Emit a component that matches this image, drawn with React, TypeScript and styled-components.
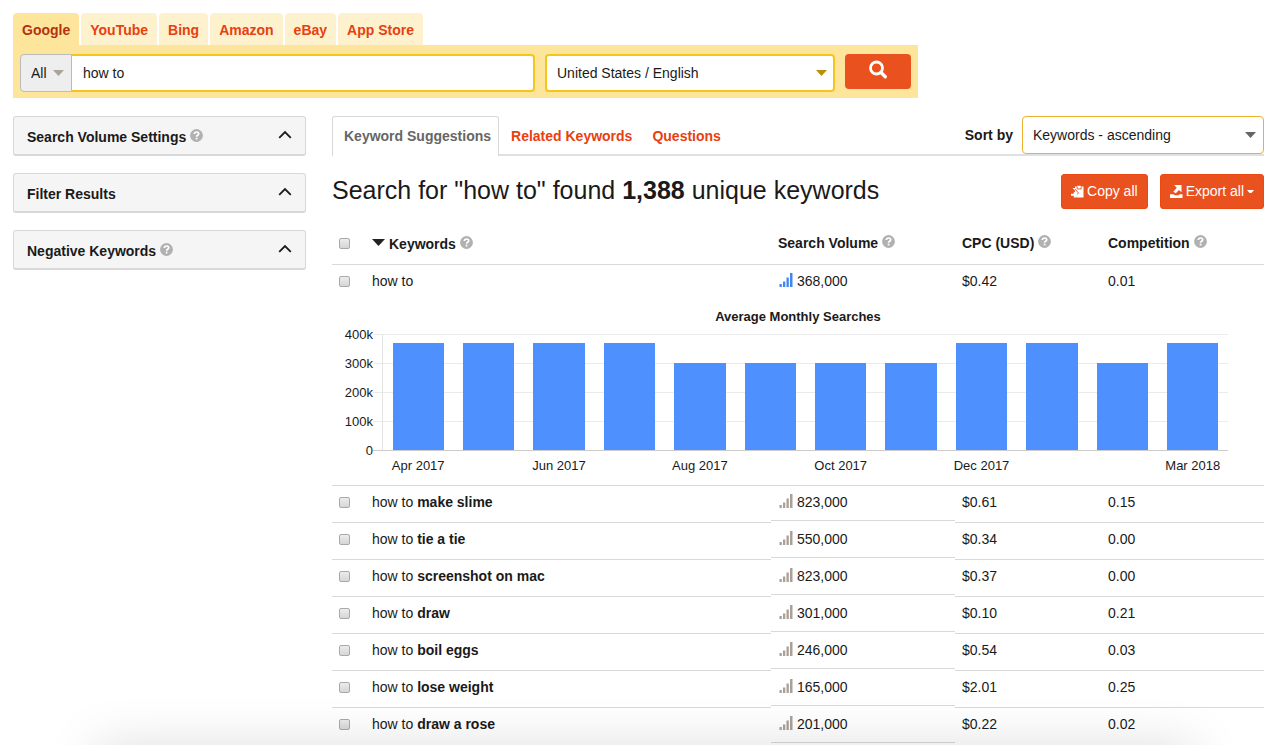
import React from "react";
import styled, { createGlobalStyle } from "styled-components";

const GlobalStyle = createGlobalStyle`
  * { box-sizing: border-box; }
  body {
    margin: 0;
    background: #fff;
    color: #1a1a1a;
    font: 14px/20px "Liberation Sans", Arial, Helvetica, sans-serif;
  }
  button, input, select { font: inherit; color: inherit; margin: 0; }
  a { text-decoration: none; }
`;

const Page = styled.div`
  padding: 13px 16px 0 13px;
  overflow: hidden;
`;

const SearchArea = styled.header`
  display: grid;
  grid-template-columns: minmax(0, 905fr) 346fr;
`;

const SourceTabs = styled.nav`
  display: flex;
  gap: 2px;
`;

const SourceTab = styled.a<{ $active?: boolean }>`
  height: 32px;
  padding: 0 9px;
  border-radius: 4px 4px 0 0;
  background: ${(p) => (p.$active ? "#fde59b" : "#fdf2cd")};
  color: ${(p) => (p.$active ? "#b5310f" : "#e8400f")};
  font-weight: bold;
  line-height: 34px;
  white-space: nowrap;
`;

const SearchForm = styled.form`
  display: flex;
  align-items: flex-start;
  gap: 10px;
  padding: 9px 7px 6px;
  background: #fde59b;
`;

const QueryGroup = styled.div`
  flex: 515 1 0;
  min-width: 0;
  height: 38px;
  display: flex;
`;

const SelectWrap = styled.div<{ $grow?: number; $width?: number }>`
  position: relative;
  flex: ${(p) => (p.$grow ? `${p.$grow} 1 0` : "none")};
  width: ${(p) => (p.$width ? `${p.$width}px` : "auto")};
  height: 38px;
`;

const Select = styled.select<{ $tone: "gray" | "gold" | "amber" }>`
  appearance: none;
  width: 100%;
  height: 100%;
  padding: 0 10px;
  border: ${(p) => (p.$tone === "gold" ? 2 : 1)}px solid
    ${(p) => ({ gray: "#bbb", gold: "#f6c51c", amber: "#eeb02e" })[p.$tone]};
  border-radius: ${(p) => (p.$tone === "gray" ? "4px 0 0 4px" : "4px")};
  background: ${(p) => (p.$tone === "gray" ? "#eee" : "#fff")};
`;

const Caret = styled.svg<{ $right: number }>`
  position: absolute;
  top: 50%;
  right: ${(p) => p.$right}px;
  margin-top: -3px;
  pointer-events: none;
`;

const QueryInput = styled.input`
  flex: 1;
  min-width: 0;
  padding: 0 11px;
  border: 2px solid #f6c51c;
  border-left: 0;
  border-radius: 0 4px 4px 0;
  background: #fff;
`;

const SearchButton = styled.button`
  width: 66px;
  height: 35px;
  display: flex;
  justify-content: center;
  padding: 6px 0 0;
  border: 0;
  border-radius: 4px;
  background: #e9511f;
`;

const Columns = styled.div`
  display: grid;
  grid-template-columns: 293px minmax(0, 1fr);
  gap: 26px;
  margin-top: 18px;
`;

const Sidebar = styled.aside`
  display: flex;
  flex-direction: column;
  gap: 17px;
`;

const PanelButton = styled.button`
  display: flex;
  align-items: center;
  justify-content: space-between;
  height: 40px;
  padding: 2px 13px 0;
  border: 1px solid #d8d8d8;
  border-bottom-width: 2px;
  border-radius: 3px;
  background: #f5f5f5;
  font-weight: bold;
`;

const WithHelp = styled.span`
  display: inline-flex;
  align-items: center;
  gap: 4px;
  white-space: nowrap;
`;

const HelpSvg = styled.svg`
  margin-bottom: 3px;
`;

const ChevronSvg = styled.svg`
  margin-bottom: 4px;
`;

const ResultTabs = styled.div`
  display: flex;
  height: 40px;
  border-bottom: 2px solid #e0e0e0;
`;

const ResultTab = styled.a<{ $active?: boolean }>`
  height: ${(p) => (p.$active ? 40 : 38)}px;
  padding: ${(p) => (p.$active ? "0 7px 0 11px" : "0 8px 0 12px")};
  border: ${(p) => (p.$active ? "1px solid #d8d8d8" : "0")};
  border-bottom: 0;
  border-radius: 3px 3px 0 0;
  background: #fff;
  color: ${(p) => (p.$active ? "#666" : "#e8400f")};
  font-weight: bold;
  line-height: ${(p) => (p.$active ? 38 : 40)}px;
  white-space: nowrap;
`;

const SortGroup = styled.div`
  display: flex;
  align-items: center;
  gap: 9px;
  margin-left: auto;
`;

const SortLabel = styled.label`
  font-weight: bold;
`;

const Summary = styled.div`
  display: flex;
  align-items: center;
  gap: 12px;
  height: 72px;
  padding-bottom: 2px;
`;

const Title = styled.h1`
  flex: 1;
  margin: 0;
  padding-bottom: 2px;
  font-size: 25px;
  font-weight: normal;
  line-height: 32px;
`;

const ActionButton = styled.button`
  display: flex;
  align-items: center;
  gap: 3px;
  height: 35px;
  padding: 0 9px;
  border: 1px solid #ea4a12;
  border-radius: 3px;
  background: #e9511f;
  color: #fff;
`;

const Results = styled.table`
  width: 100%;
  table-layout: fixed;
  border-collapse: separate;
  border-spacing: 0;
`;

const CheckCol = styled.col`
  width: 40px;
`;
const VolumeCol = styled.col`
  width: 184px;
`;
const CpcCol = styled.col`
  width: 146px;
`;
const CompetitionCol = styled.col`
  width: 163px;
`;

const HeadCell = styled.th<{ $inset?: number }>`
  height: 37px;
  padding: 0 0 7px ${(p) => p.$inset ?? 0}px;
  border-bottom: 1px solid #d9d9d9;
  text-align: left;
`;

const Cell = styled.td<{ $inset?: number; $ruled?: boolean }>`
  height: 37px;
  padding: 0 0 0 ${(p) => p.$inset ?? 0}px;
  border-bottom: ${(p) => (p.$ruled ? "1px solid #d9d9d9" : "0")};
  vertical-align: top;
  line-height: 33px;
`;

const Volume = styled.div<{ $ruled?: boolean }>`
  display: flex;
  gap: 4px;
  height: 35px;
  padding-left: 8px;
  border-bottom: ${(p) => (p.$ruled ? "1px solid #d9d9d9" : "0")};
`;

const BarsSvg = styled.svg`
  margin-top: 8px;
`;

const Check = styled.input<{ $head?: boolean }>`
  appearance: none;
  display: block;
  width: 11px;
  height: 11px;
  margin: ${(p) => (p.$head ? 1 : 11)}px 0 0 7px;
  border: 1px solid #a9a9a9;
  border-radius: 2px;
  background: linear-gradient(#ececec, #d6d6d6);
`;

const ChartCell = styled.td`
  padding: 7px 36px 4px 0;
  border-bottom: 1px solid #d9d9d9;
`;

const ChartTitle = styled.div`
  padding-left: 36px;
  font-size: 13px;
  font-weight: bold;
  line-height: 16px;
  text-align: center;
`;

const ChartGrid = styled.div`
  display: grid;
  grid-template-columns: 41px minmax(0, 1fr);
  align-items: start;
  margin-top: 2px;
  font-size: 13px;
`;

const YAxis = styled.div`
  display: flex;
  flex-direction: column;
  gap: 14px;
  text-align: right;
  line-height: 15px;
`;

const PlotArea = styled.div`
  padding-top: 7px;
`;

const Plot = styled.div`
  display: grid;
  grid-template-columns: 10px repeat(12, minmax(0, 1fr));
  align-items: end;
  justify-items: center;
  height: 117px;
  border-bottom: 1px solid #ccc;
  background: repeating-linear-gradient(#ebebeb 0 1px, transparent 1px 29px);
`;

const AxisLine = styled.span`
  justify-self: end;
  width: 1px;
  height: 100%;
  background: #e4e4e4;
`;

const Bar = styled.span`
  width: 73%;
  background: #4d90fe;
`;

const Months = styled.div`
  display: grid;
  grid-template-columns: repeat(12, minmax(0, 1fr));
  padding-left: 10px;
  line-height: 30px;
`;

const Month = styled.span`
  display: flex;
  justify-content: center;
  white-space: nowrap;
`;

const BottomShadow = styled.div`
  position: fixed;
  top: 100%;
  left: 95px;
  right: 85px;
  height: 100px;
  box-shadow: 0 0 52px rgba(0, 0, 0, 0.13);
  pointer-events: none;
`;

const Help = () => (
  <HelpSvg width="13" height="13" viewBox="0 0 13 13" aria-hidden="true">
    <circle cx="6.5" cy="6.5" r="6.4" fill="#b1b1b1" />
    <path d="M4.3 5.1C4.3 3.7 5.200 3 6.500 3s2.200.7 2.200 1.800c0 1.500-2.100 1.500-2.100 3" fill="none" stroke="#fff" strokeWidth="1.7" />
    <rect x="5.700" y="8.700" width="1.800" height="1.700" fill="#fff" />
  </HelpSvg>
);

const DownArrow = ({ color, right }: { color: string; right: number }) => (
  <Caret $right={right} width="11" height="6" viewBox="0 0 11 6" aria-hidden="true">
    <path d="M0 0h11L5.5 6z" fill={color} />
  </Caret>
);

const ChevronUp = () => (
  <ChevronSvg width="14" height="9" viewBox="0 0 14 9" aria-hidden="true">
    <path d="M1.2 7.800L7 2l5.800 5.800" fill="none" stroke="#1a1a1a" strokeWidth="1.800" />
  </ChevronSvg>
);

const VolumeBars = ({ active }: { active?: boolean }) => (
  <BarsSvg width="14" height="14" viewBox="0 0 14 14" fill={active ? "#4285f4" : "#aaa097"} aria-hidden="true">
    <rect x="0.500" y="11" width="2.300" height="3" />
    <rect x="4" y="8.500" width="2.300" height="5.500" />
    <rect x="7.500" y="4.500" width="2.300" height="9.500" />
    <rect x="11" y="0" width="2.500" height="14" />
  </BarsSvg>
);

const sources = ["Google", "YouTube", "Bing", "Amazon", "eBay", "App Store"];
const panels = [
  { label: "Search Volume Settings", help: true },
  { label: "Filter Results", help: false },
  { label: "Negative Keywords", help: true },
];
const months = [
  { label: "Apr 2017", value: 368 },
  { label: "", value: 368 },
  { label: "Jun 2017", value: 368 },
  { label: "", value: 368 },
  { label: "Aug 2017", value: 301 },
  { label: "", value: 301 },
  { label: "Oct 2017", value: 301 },
  { label: "", value: 301 },
  { label: "Dec 2017", value: 368 },
  { label: "", value: 368 },
  { label: "", value: 301 },
  { label: "Mar 2018", value: 368 },
];
const rows = [
  ["make slime", "823,000", "$0.61", "0.15"],
  ["tie a tie", "550,000", "$0.34", "0.00"],
  ["screenshot on mac", "823,000", "$0.37", "0.00"],
  ["draw", "301,000", "$0.10", "0.21"],
  ["boil eggs", "246,000", "$0.54", "0.03"],
  ["lose weight", "165,000", "$2.01", "0.25"],
  ["draw a rose", "201,000", "$0.22", "0.02"],
];

export default function App() {
  return (
    <Page>
      <GlobalStyle />
      <SearchArea>
        <div>
          <SourceTabs aria-label="Search source">
            {sources.map((name, i) => (
              <SourceTab key={name} href="#" $active={i === 0}>
                {name}
              </SourceTab>
            ))}
          </SourceTabs>
          <SearchForm onSubmit={(e) => e.preventDefault()}>
            <QueryGroup>
              <SelectWrap $width={52}>
                <Select $tone="gray" aria-label="Search type">
                  <option>All</option>
                </Select>
                <DownArrow color="#aaa49a" right={8} />
              </SelectWrap>
              <QueryInput aria-label="Keyword" defaultValue="how to" />
            </QueryGroup>
            <SelectWrap $grow={290}>
              <Select $tone="gold" aria-label="Country and language">
                <option>United States / English</option>
              </Select>
              <DownArrow color="#bd8d0b" right={8} />
            </SelectWrap>
            <SearchButton aria-label="Search">
              <svg width="20" height="20" viewBox="0 0 20 20" fill="none" stroke="#fff" aria-hidden="true">
                <circle cx="8.500" cy="8" r="6" strokeWidth="2.800" />
                <path d="M13 12.500l4.300 4.300" strokeWidth="3.400" strokeLinecap="round" />
              </svg>
            </SearchButton>
          </SearchForm>
        </div>
      </SearchArea>

      <Columns>
        <Sidebar>
          {panels.map((p) => (
            <PanelButton key={p.label} type="button" aria-expanded="false">
              <WithHelp>
                {p.label}
                {p.help && <Help />}
              </WithHelp>
              <ChevronUp />
            </PanelButton>
          ))}
        </Sidebar>

        <main>
          <ResultTabs>
            <ResultTab href="#" $active>
              Keyword Suggestions
            </ResultTab>
            <ResultTab href="#">Related Keywords</ResultTab>
            <ResultTab href="#">Questions</ResultTab>
            <SortGroup>
              <SortLabel htmlFor="sort">Sort by</SortLabel>
              <SelectWrap $width={242}>
                <Select id="sort" $tone="amber">
                  <option>Keywords - ascending</option>
                </Select>
                <DownArrow color="#666" right={8} />
              </SelectWrap>
            </SortGroup>
          </ResultTabs>

          <Summary>
            <Title>
              Search for "how to" found <b>1,388</b> unique keywords
            </Title>
            <ActionButton type="button">
              <svg width="13" height="13" viewBox="0 0 13 13" aria-hidden="true">
                <path d="M4 1.500h2.200V0.800h3.600v0.700H12.500V12.500H4z" fill="#fff" />
                <path d="M6.200 1.800v2.200h3.900V1.800M3.500 3.500l4 4.500-4 4" fill="none" stroke="#e9511f" strokeWidth="0.900" />
                <path d="M0 8.800h2.800V6.500L6.800 9.800 2.800 13v-2.300H0z" fill="#fff" />
                <path d="M1.500 3l2.500 2.500V3z" fill="#fff" />
              </svg>
              Copy all
            </ActionButton>
            <ActionButton type="button">
              <svg width="13" height="13" viewBox="0 0 13 13" aria-hidden="true">
                <path d="M4 0h7.500v7.200L9 5 5.800 8.300 3.300 6.800 6.800 2.800z" fill="#fff" />
                <path d="M0 9.300h3.500l1.500 0.900h3.500l1.300-0.900H12.500V13H0z" fill="#fff" />
              </svg>
              Export all
              <svg width="7" height="3" viewBox="0 0 7 3" fill="#fff" aria-hidden="true">
                <path d="M0 0h7L4.500 3h-2z" />
              </svg>
            </ActionButton>
          </Summary>

          <Results>
            <colgroup>
              <CheckCol />
              <col />
              <VolumeCol />
              <CpcCol />
              <CompetitionCol />
            </colgroup>
            <thead>
              <tr>
                <HeadCell>
                  <Check $head type="checkbox" aria-label="Select all keywords" />
                </HeadCell>
                <HeadCell>
                  <WithHelp>
                    <HelpSvg width="13" height="7" viewBox="0 0 13 7">
                      <path d="M0 0h13L6.500 7z" fill="#222" />
                    </HelpSvg>
                    Keywords <Help />
                  </WithHelp>
                </HeadCell>
                <HeadCell $inset={7}>
                  <WithHelp>
                    Search Volume <Help />
                  </WithHelp>
                </HeadCell>
                <HeadCell $inset={7}>
                  <WithHelp>
                    CPC (USD) <Help />
                  </WithHelp>
                </HeadCell>
                <HeadCell $inset={7}>
                  <WithHelp>
                    Competition <Help />
                  </WithHelp>
                </HeadCell>
              </tr>
            </thead>
            <tbody>
              <tr>
                <Cell>
                  <Check type="checkbox" aria-label="how to" />
                </Cell>
                <Cell>how to</Cell>
                <Cell>
                  <Volume>
                    <VolumeBars active />
                    368,000
                  </Volume>
                </Cell>
                <Cell $inset={7}>$0.42</Cell>
                <Cell $inset={7}>0.01</Cell>
              </tr>
              <tr>
                <ChartCell colSpan={5}>
                  <ChartTitle>Average Monthly Searches</ChartTitle>
                  <ChartGrid>
                    <YAxis>
                      {["400k", "300k", "200k", "100k", "0"].map((t) => (
                        <span key={t}>{t}</span>
                      ))}
                    </YAxis>
                    <PlotArea>
                      <Plot>
                        <AxisLine />
                        {months.map((m, i) => (
                          <Bar key={i} style={{ height: `${m.value / 4}%` }} />
                        ))}
                      </Plot>
                      <Months>
                        {months.map((m, i) => (
                          <Month key={i}>{m.label}</Month>
                        ))}
                      </Months>
                    </PlotArea>
                  </ChartGrid>
                </ChartCell>
              </tr>
              {rows.map(([term, volume, cpc, competition], i) => {
                const ruled = i < rows.length - 1;
                return (
                  <tr key={term}>
                    <Cell $ruled={ruled}>
                      <Check type="checkbox" aria-label={`how to ${term}`} />
                    </Cell>
                    <Cell $ruled={ruled}>
                      how to <b>{term}</b>
                    </Cell>
                    <Cell>
                      <Volume $ruled>
                        <VolumeBars />
                        {volume}
                      </Volume>
                    </Cell>
                    <Cell $inset={7} $ruled={ruled}>
                      {cpc}
                    </Cell>
                    <Cell $inset={7} $ruled={ruled}>
                      {competition}
                    </Cell>
                  </tr>
                );
              })}
            </tbody>
          </Results>
        </main>
      </Columns>
      <BottomShadow />
    </Page>
  );
}
